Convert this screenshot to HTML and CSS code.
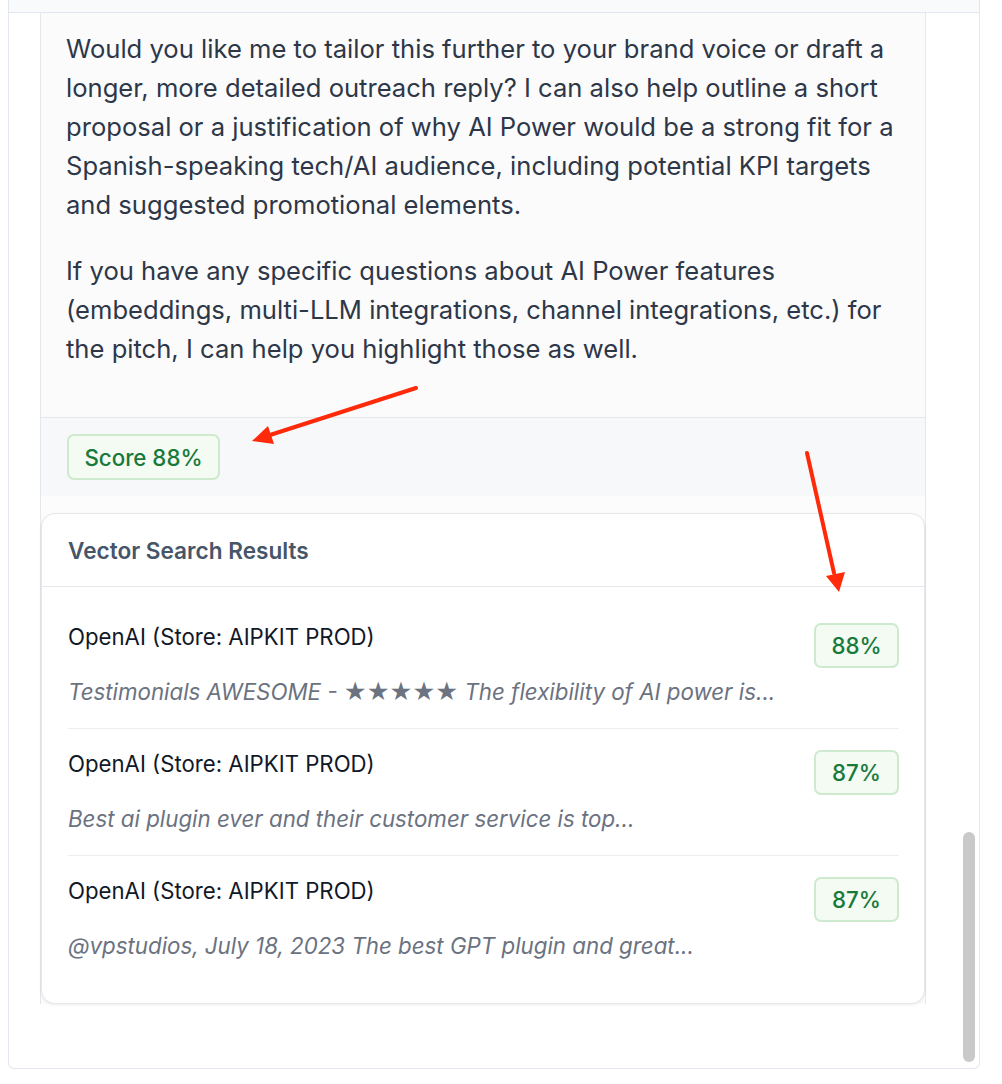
FILE: index.html
```html
<!DOCTYPE html>
<html lang="en">
<head>
<meta charset="utf-8">
<title>Chat message with vector search results</title>
<link rel="stylesheet" href="styles.css">
</head>
<body>
<div class="frame">
  <div class="strip"></div>
  <div class="scroll">
    <div class="msg">
      <div class="msg-body">
        <p>Would you like me to tailor this further to your brand voice or draft a longer, more detailed outreach reply? I can also help outline a short proposal or a justification of why AI Power would be a strong fit for a Spanish-speaking tech/AI audience, including potential KPI targets and suggested promotional elements.</p>
        <p>If you have any specific questions about AI Power features (embeddings, multi-LLM integrations, channel integrations, etc.) for the pitch, I can help you highlight those as well.</p>
      </div>
      <div class="msg-footer">
        <span class="badge score">Score 88%</span>
      </div>
      <div class="gap"></div>
      <div class="card">
        <div class="card-head">Vector Search Results</div>
        <div class="card-list">
          <div class="row">
            <div class="row-text">
              <div class="row-title">OpenAI (Store: AIPKIT PROD)</div>
              <div class="row-sub">Testimonials AWESOME - <span class="stars">★★★★★</span> The flexibility of AI power is...</div>
            </div>
            <span class="badge pct">88%</span>
          </div>
          <div class="row">
            <div class="row-text">
              <div class="row-title">OpenAI (Store: AIPKIT PROD)</div>
              <div class="row-sub">Best ai plugin ever and their customer service is top...</div>
            </div>
            <span class="badge pct">87%</span>
          </div>
          <div class="row">
            <div class="row-text">
              <div class="row-title">OpenAI (Store: AIPKIT PROD)</div>
              <div class="row-sub">@vpstudios, July 18, 2023 The best GPT plugin and great...</div>
            </div>
            <span class="badge pct">87%</span>
          </div>
        </div>
      </div>
    </div>
  </div>
  <div class="thumb"></div>
</div>
<svg class="annot" width="1002" height="1084" viewBox="0 0 1002 1084" aria-hidden="true">
  <line x1="416" y1="388" x2="270" y2="435" stroke="#ff2a0a" stroke-width="4" stroke-linecap="round"/>
  <polygon points="252,441 274,444 268,426" fill="#ff2a0a"/>
  <line x1="807" y1="453" x2="834" y2="573" stroke="#ff2a0a" stroke-width="4" stroke-linecap="round"/>
  <polygon points="839,592 845,572 826,576" fill="#ff2a0a"/>
</svg>
</body>
</html>
```

FILE: styles.css
```css
html, body {
  margin: 0;
  padding: 0;
  background: #ffffff;
}

body {
  position: relative;
  width: 1002px;
  height: 1084px;
  overflow: hidden;
  font-family: Inter, "Noto Sans", "Liberation Sans", sans-serif;
}

.frame {
  position: relative;
  margin-left: 8px;
  width: 970px;
  height: 1068px;
  border: 1px solid #e3e6ee;
  border-top: 0;
  border-radius: 0 0 6px 6px;
  background: #ffffff;
}

.strip {
  height: 12px;
  background: #f9fafb;
  border-bottom: 1px solid #e3e6ee;
}

.scroll {
  padding-left: 31px;
}

.msg {
  width: 884px;
  border-left: 1px solid #e5e7eb;
  border-right: 1px solid #e5e7eb;
  background: #fcfcfd;
}

.msg-body {
  background: #fbfbfc;
  padding: 16px 25px 22px 25px;
  color: #2d3748;
  font-size: 25.6px;
  line-height: 39px;
}

.msg-body p {
  margin: 0 0 27px 0;
}

.msg-footer {
  border-top: 1px solid #e5e7eb;
  background: #f7f8fa;
  padding: 16px 26px;
  display: flex;
}

.badge {
  display: inline-flex;
  align-items: center;
  justify-content: center;
  box-sizing: border-box;
  height: 46px;
  border: 2px solid #cdeacf;
  border-radius: 7px;
  background: #f3fbf3;
  color: #17793a;
  font-size: 22.3px;
  font-weight: 500;
}

.score {
  width: 153px;
}

.gap {
  height: 17px;
}

.card {
  background: #ffffff;
  border: 1px solid #e5e7eb;
  border-radius: 14px;
  box-shadow: 0 1px 3px rgba(15, 23, 42, 0.08);
  overflow: hidden;
}

.card-head {
  height: 72px;
  display: flex;
  align-items: center;
  padding: 0 26px;
  border-bottom: 1px solid #e5e7eb;
  color: #475569;
  font-size: 22.6px;
  font-weight: 600;
}

.card-list {
  padding: 15px 25px 21px 26px;
}

.row {
  display: flex;
  align-items: flex-start;
  justify-content: space-between;
  padding: 21px 0 22px 0;
  border-bottom: 1px solid #eceef2;
}

.row:last-child {
  border-bottom: 0;
}

.row-title {
  color: #111827;
  font-size: 22.2px;
  line-height: 28px;
}

.row-sub {
  margin-top: 27px;
  color: #6b7280;
  font-size: 22.3px;
  font-style: italic;
  line-height: 28px;
}

.stars {
  font-style: normal;
  font-family: "DejaVu Sans", sans-serif;
  font-size: 25.5px;
  line-height: 0;
  letter-spacing: 0;
}

.pct {
  width: 85px;
  height: 45px;
}

.thumb {
  position: absolute;
  left: 954px;
  top: 832px;
  width: 12px;
  height: 230px;
  border-radius: 6px;
  background: #c9c9c9;
}

.annot {
  position: absolute;
  left: 0;
  top: 0;
  pointer-events: none;
}
```
